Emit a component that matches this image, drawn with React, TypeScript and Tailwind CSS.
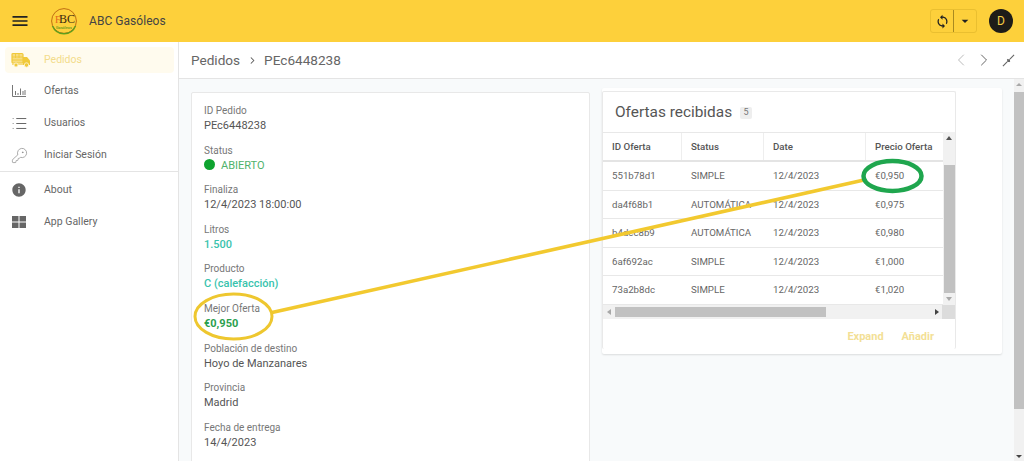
import React from "react";
import { MdMenu, MdSync, MdArrowDropDown, MdInfo } from "react-icons/md";
import { ChevronLeft, ChevronRight, KeyRound, List } from "lucide-react";

function Truck() {
  return (
    <svg width="20" height="16" viewBox="0 0 20 16" fill="none">
      <rect x="1" y="1.5" width="11" height="9.5" rx="1" fill="#f7dc80" stroke="#f0c93a" strokeWidth="1.2" />
      <path d="M1 5h11M1 8h11M4.5 2v4M8 2v4" stroke="#f0c93a" strokeWidth="0.9" />
      <path d="M12 5h4l3 3.5V13H12z" fill="#f0c93a" />
      <rect x="1" y="11" width="11" height="2" fill="#f7dc80" />
      <circle cx="15.5" cy="13" r="2.2" fill="#f0c93a" stroke="#fdf6dd" strokeWidth="0.8" />
      <circle cx="5" cy="13" r="2" fill="#f0c93a" stroke="#fdf6dd" strokeWidth="0.8" />
    </svg>
  );
}

function Bars() {
  return (
    <svg width="14" height="12" viewBox="0 0 14 12" fill="none" stroke="#777" strokeWidth="1">
      <path d="M.5 0v11.5h13.5" />
      <path d="M3.5 6v4M6 8v2M8.5 3.5v6.5M11 6v4M13 5v5" />
    </svg>
  );
}

function Gallery() {
  return (
    <svg width="14" height="12" viewBox="0 0 14 12" fill="#666">
      <rect x="0" y="0" width="6.5" height="5.5" />
      <rect x="7.5" y="0" width="6.5" height="5.5" />
      <rect x="0" y="6.5" width="6.5" height="5.5" />
      <rect x="7.5" y="6.5" width="6.5" height="5.5" />
    </svg>
  );
}

function Compress() {
  return (
    <svg width="13" height="13" viewBox="0 0 14 14" fill="none" stroke="#666" strokeWidth="1.2">
      <path d="M1 13 5.5 8.5M8.5 5.5 13 1" />
      <path d="M5.8 4.8v3.4H9.2z" fill="#666" stroke="none" transform="translate(-.2 .4)" />
      <path d="M4.8 5.8h3.4v3.4z" fill="#666" stroke="none" transform="translate(.4 -.2)" />
    </svg>
  );
}

function Logo() {
  return (
    <svg width="28" height="28" viewBox="0 0 28 28" fill="none">
      <circle cx="14" cy="14" r="12.4" stroke="#b8620f" strokeWidth="0.9" />
      <path d="M2.5 19a12.4 12.4 0 0 0 23 0" stroke="#5f9e1e" strokeWidth="1.4" />
      <text x="5" y="16" fontSize="10" fill="#e2661a" fontFamily="Liberation Serif, serif">F</text>
      <text x="9" y="16" fontSize="12" fill="#3a2a10" fontFamily="Liberation Serif, serif">BC</text>
      <text x="6" y="21.5" fontSize="3.8" fill="#3f8a14" fontFamily="Roboto, sans-serif">Gasóleos</text>
    </svg>
  );
}

const nav = [
  { label: "Ofertas", icon: <Bars /> },
  { label: "Usuarios", icon: <List size={17} strokeWidth={1.4} color="#666" /> },
  { label: "Iniciar Sesión", icon: <KeyRound size={17} strokeWidth={1} color="#888" /> },
];

const details = [
  { label: "ID Pedido", value: "PEc6448238" },
  { label: "Status", value: "ABIERTO", kind: "status" },
  { label: "Finaliza", value: "12/4/2023 18:00:00" },
  { label: "Litros", value: "1.500", kind: "teal" },
  { label: "Producto", value: "C (calefacción)", kind: "teal" },
  { label: "Mejor Oferta", value: "€0,950", kind: "green" },
  { label: "Población de destino", value: "Hoyo de Manzanares" },
  { label: "Provincia", value: "Madrid" },
  { label: "Fecha de entrega", value: "14/4/2023" },
];

const rows = [
  ["551b78d1", "SIMPLE", "12/4/2023", "€0,950"],
  ["da4f68b1", "AUTOMÁTICA", "12/4/2023", "€0,975"],
  ["b4dcc8b9", "AUTOMÁTICA", "12/4/2023", "€0,980"],
  ["6af692ac", "SIMPLE", "12/4/2023", "€1,000"],
  ["73a2b8dc", "SIMPLE", "12/4/2023", "€1,020"],
];

const cols = ["w-[79px]", "w-[82px]", "w-[102px]", "w-[77px]"];

export default function App() {
  return (
    <div className="relative flex h-[461px] w-[1024px] flex-col overflow-hidden bg-white font-['Roboto',sans-serif] text-[#555]">
      <header className="flex h-[42px] shrink-0 items-center bg-[#fdd03b]">
        <MdMenu size={20} color="#222" className="ml-[10px]" />
        <span className="ml-[20px]"><Logo /></span>
        <span className="ml-[11px] text-[12px] tracking-[0.05px] text-[#444]">ABC Gasóleos</span>
        <div className="ml-auto flex h-[24px] w-[47px] rounded-[3px] border border-[#eabf30]">
          <span className="flex w-[23px] items-center justify-center border-r border-[#a98a20]">
            <MdSync size={15} color="#222" />
          </span>
          <span className="flex flex-1 items-center justify-center">
            <MdArrowDropDown size={16} color="#222" />
          </span>
        </div>
        <div className="mr-[11px] ml-[12px] flex h-[24px] w-[24px] items-center justify-center rounded-full bg-[#1e1c18] text-[12px] text-[#f5cd45]">D</div>
      </header>

      <div className="flex min-h-0 flex-1">
        <aside className="w-[179px] shrink-0 border-r border-[#e4e4e4] bg-white">
          <div className="flex h-[33px] items-center pt-[2px] pl-[5px]">
            <div className="flex h-[26px] w-[169px] items-center rounded-[4px] bg-[#fffbee] pl-[6px]">
              <Truck />
              <span className="ml-[13px] text-[10.5px] text-[#f3dc8b]">Pedidos</span>
            </div>
          </div>
          {nav.map((n) => (
            <div key={n.label} className="flex h-[32px] items-center">
              <span className="flex w-[44px] justify-center pr-[6px]">{n.icon}</span>
              <span className="text-[10.5px] text-[#666]">{n.label}</span>
            </div>
          ))}
          <div className="border-t border-[#e4e4e4] pt-[2px]">
            <div className="flex h-[32px] items-center">
              <span className="flex w-[44px] justify-center pr-[6px]"><MdInfo size={16} color="#666" /></span>
              <span className="text-[10.5px] text-[#666]">About</span>
            </div>
            <div className="flex h-[32px] items-center">
              <span className="flex w-[44px] justify-center pr-[6px]"><Gallery /></span>
              <span className="text-[10.5px] text-[#666]">App Gallery</span>
            </div>
          </div>
        </aside>

        <main className="flex min-w-0 flex-1 flex-col bg-[#f8fafb]">
          <div className="flex h-[37px] shrink-0 items-center border-b border-[#e4e4e4] bg-white pl-[12px] text-[13.6px] text-[#666]">
            <span>Pedidos</span>
            <ChevronRight size={11} strokeWidth={2.2} className="mx-[6.5px] text-[#555]" />
            <span>PEc6448238</span>
            <div className="mr-[9px] ml-auto flex items-center gap-[3px]">
              <ChevronLeft size={20} strokeWidth={1.2} color="#bbb" />
              <ChevronRight size={20} strokeWidth={1.2} color="#666" />
              <span className="ml-[5px]"><Compress /></span>
            </div>
          </div>

          <div className="flex min-h-0 flex-1">
            <div className="flex min-w-0 flex-1 items-start pt-[13px] pl-[12px]">
              <section className="h-[400px] w-[399px] shrink-0 rounded-[2px] border border-[#e8e8e8] bg-white pt-[11px] pl-[12px]">
                {details.map((d) => (
                  <div key={d.label} className="h-[39.6px]">
                    <div className="text-[10px] leading-[14px] text-[#777]">{d.label}</div>
                    {d.kind === "status" ? (
                      <div className="flex h-[16px] items-center text-[11px] text-[#4fb26b]">
                        <span className="mb-[2px] h-[11px] w-[11px] rounded-full bg-[#0ea32f]" />
                        <span className="mt-[1px] ml-[6px]">{d.value}</span>
                      </div>
                    ) : (
                      <div
                        className={
                          d.kind === "teal"
                            ? "text-[11px] leading-[16px] font-medium text-[#39c3ad]"
                            : d.kind === "green"
                              ? "text-[11px] leading-[16px] font-bold text-[#2ba04e]"
                              : "text-[11px] leading-[16px] text-[#555]"
                        }
                      >
                        {d.value}
                      </div>
                    )}
                  </div>
                ))}
              </section>

              <section className="mt-[-4px] ml-[12px] h-[266px] w-[400px] shrink-0 rounded-[2px] bg-white pt-[3px] shadow-[0_1px_2px_rgba(0,0,0,0.12)]">
                <div className="h-[258px] w-[354px] rounded-[2px] border border-b-0 border-[#e9e9e9] bg-white">
                  <div className="flex h-[40px] items-center pt-[2px] pl-[12px]">
                    <span className="text-[15.4px] text-[#555]">Ofertas recibidas</span>
                    <span className="ml-[8px] flex h-[12px] w-[12px] items-center justify-center rounded-[2px] bg-[#eeeeee] text-[9px] text-[#777]">5</span>
                  </div>
                  <div className="flex">
                    <div className="w-[340px]">
                      <div className="flex h-[30px] border-t border-b-2 border-t-[#e8e8e8] border-b-[#e4e4e4] text-[9.7px] font-medium text-[#555]">
                        {["ID Oferta", "Status", "Date", "Precio Oferta"].map((h, i) => (
                          <div key={h} className={`${cols[i]} flex items-center pt-[1px] pl-[9px] ${i < 3 ? "border-r border-[#eeeeee]" : ""}`}>{h}</div>
                        ))}
                      </div>
                      {rows.map((r) => (
                        <div key={r[0]} className="flex h-[28.6px] border-b border-[#e8e8e8] text-[9.7px] text-[#666]">
                          {r.map((c, i) => (
                            <div key={i} className={`${cols[i]} flex items-center pt-[1px] pl-[9px]`}>{c}</div>
                          ))}
                        </div>
                      ))}
                    </div>
                    <div className="flex w-[13px] flex-col items-center bg-[#f1f1f1]">
                      <span className="mt-[4px] h-0 w-0 border-x-[3px] border-b-[4px] border-x-transparent border-b-[#555]" />
                      <span className="mt-[25px] h-[128px] w-[11px] bg-[#c1c1c1]" />
                      <span className="mt-[4px] h-0 w-0 border-x-[3px] border-t-[4px] border-x-transparent border-t-[#a8a8a8]" />
                    </div>
                  </div>
                  <div className="flex h-[14px]">
                    <div className="flex w-[340px] items-center bg-[#f1f1f1]">
                      <span className="ml-[4px] h-0 w-0 border-y-[3px] border-r-[4px] border-y-transparent border-r-[#a8a8a8]" />
                      <span className="ml-[4px] h-[10px] w-[211px] bg-[#c1c1c1]" />
                      <span className="mr-[3px] ml-auto h-0 w-0 border-y-[3px] border-l-[4px] border-y-transparent border-l-[#444]" />
                    </div>
                    <div className="w-[13px] bg-[#dcdcdc]" />
                  </div>
                  <div className="flex h-[37px] items-center justify-end gap-[18px] pr-[21px] text-[11px] font-bold text-[#f3df96]">
                    <span>Expand</span>
                    <span>Añadir</span>
                  </div>
                </div>
              </section>
            </div>

            <div className="flex w-[10px] shrink-0 flex-col items-center bg-[#f1f1f1]">
              <span className="mt-[4px] h-0 w-0 border-x-[3px] border-b-[3px] border-x-transparent border-b-[#a8a8a8]" />
              <span className="mt-[6px] h-[317px] w-[10px] bg-[#c1c1c1]" />
              <span className="mt-auto mb-[3px] h-0 w-0 border-x-[3px] border-t-[3px] border-x-transparent border-t-[#444]" />
            </div>
          </div>
        </main>
      </div>

      <svg className="pointer-events-none absolute top-0 left-0" width="1024" height="461" fill="none">
        <line x1="272" y1="312.5" x2="864" y2="180" stroke="#f2c92f" strokeWidth="3.6" />
        <ellipse cx="233.5" cy="316.5" rx="38.5" ry="22.5" stroke="#eec72f" strokeWidth="3" />
        <ellipse cx="892.5" cy="176" rx="29" ry="15" stroke="#1fa64e" strokeWidth="4.5" />
      </svg>
    </div>
  );
}
